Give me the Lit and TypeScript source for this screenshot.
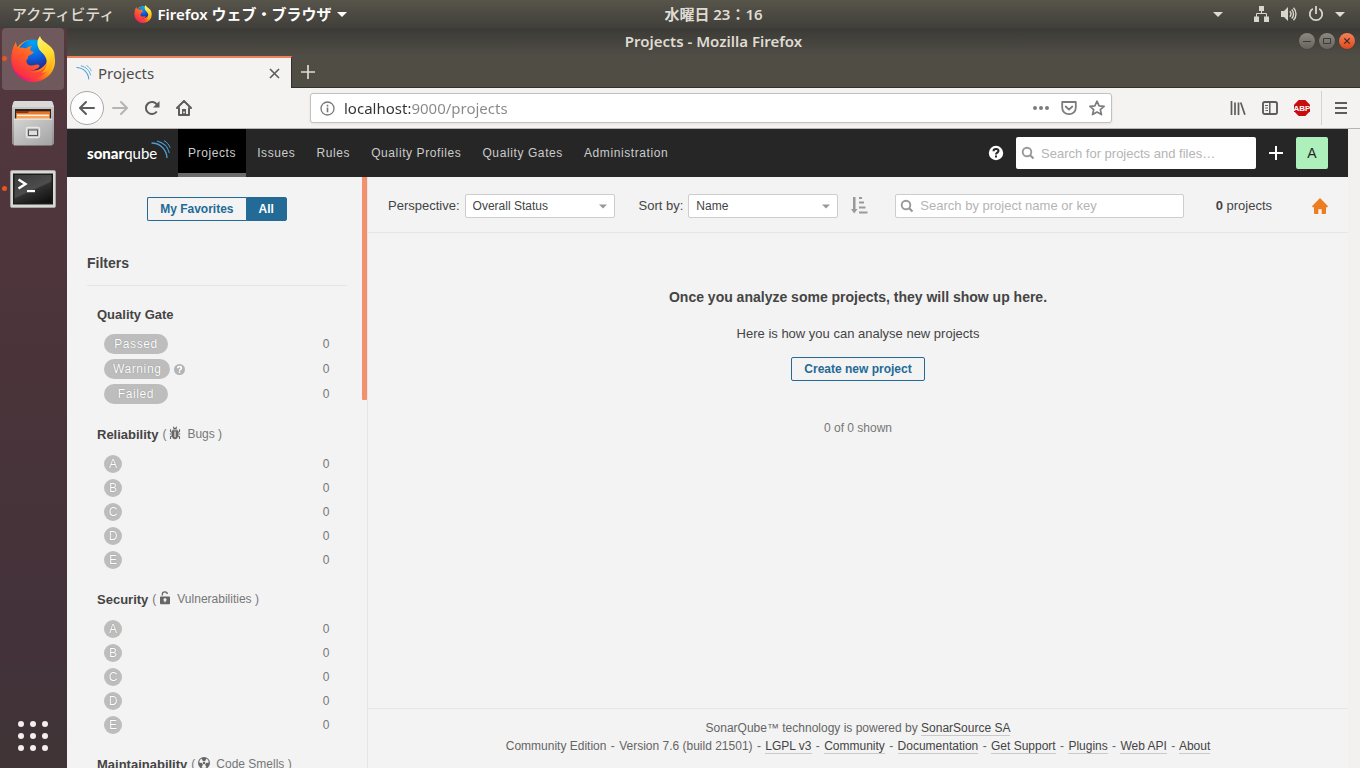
import { LitElement, html, svg, css, nothing } from "lit";
import { customElement, property } from "lit/decorators.js";

const firefoxLogo = (id: string, size: number) => html`
  <svg width=${size} height=${size} viewBox="0 0 46 46" aria-hidden="true">
    <defs>
      <linearGradient id="${id}-body" x1="0.9" y1="0.1" x2="0.1" y2="0.9">
        <stop offset="0" stop-color="#fff14a" />
        <stop offset="0.3" stop-color="#ffc21a" />
        <stop offset="0.5" stop-color="#ff8a16" />
        <stop offset="0.72" stop-color="#ff3b3d" />
        <stop offset="1" stop-color="#d9128a" />
      </linearGradient>
      <radialGradient id="${id}-globe" cx="0.5" cy="0.1" r="0.95">
        <stop offset="0" stop-color="#00a8f5" />
        <stop offset="0.5" stop-color="#0a63e0" />
        <stop offset="1" stop-color="#28197c" />
      </radialGradient>
      <linearGradient id="${id}-head" x1="0.8" y1="0" x2="0.1" y2="1">
        <stop offset="0" stop-color="#ff9a1c" />
        <stop offset="0.5" stop-color="#ff5a2a" />
        <stop offset="1" stop-color="#f8204e" />
      </linearGradient>
      <linearGradient id="${id}-tail" x1="0.4" y1="0" x2="0.6" y2="1">
        <stop offset="0" stop-color="#fff36a" />
        <stop offset="0.5" stop-color="#ffdd2e" />
        <stop offset="1" stop-color="#ff9f14" />
      </linearGradient>
    </defs>
    <path fill="url(#${id}-body)" d="M6 6c0 2 .6 4 1.400 5.500C10 8 14 5 19 4h9c9 3 17 12 17 21 0 12-10 21-22 21S1 36 1 24C1 17 3 11 6 6z" />
    <circle cx="23" cy="19" r="15.500" fill="url(#${id}-globe)" />
    <path fill="url(#${id}-head)" d="M6 6c0 3 .6 5 1.500 6 3-1 6-.7 8.500.5 1.500-1.500 3.500-2.500 6-2.500-1.500 1.500-2 3-1.500 5 2 .6 3.500.4 3 1.600-.6 1.600-5 3-5.500 4.400-.4 1.500.5 3-1.500 2.500-.5 3 1 5.500 4 6 3.500.4 5.500-1.500 8-.8 1.700.5 1 2.300-.5 3.300-3 2-7 3.500-11 2 5 4 12 3 16-1 3-3 5-8 4-14l4 1c1 9-5 21-16 22C11 44 2 35 2 24 2 16 3 11 6 6z" />
    <path fill="url(#${id}-tail)" d="M30 0c-3 4-3.500 8-1.500 12 1.500 4 7 6 8 12 .8 5-1 10-5 13 7-1 12-6 13-14C46 12 38 9 34 5.500 32 4 30.500 2 30 0z" />
  </svg>
`;

const waves = (size: number) => html`
  <svg width=${size} height=${size} viewBox="0 0 20 20" fill="none" stroke="#4b9fd5" aria-hidden="true">
    <path stroke-width="1.300" d="M.5 3C9 3 15.500 9.500 16 18" />
    <path stroke-width="1.100" d="M6 1c7 1.700 11 6 12.300 12" />
    <path stroke-width="1" d="M13 .7c3 1.500 5 4 6.200 7" />
  </svg>
`;

const caret = (w: number, color: string) => html`
  <svg class="caret" width=${w} height="5" viewBox="0 0 10 5" aria-hidden="true"><path fill=${color} d="M0 0h10L5 5z" /></svg>
`;

const magnifier = html`
  <svg width="14" height="14" viewBox="0 0 14 14" fill="none" stroke="#999" aria-hidden="true">
    <circle cx="6" cy="6" r="4.300" stroke-width="1.900" />
    <path stroke-width="2.200" d="M9.200 9.200l3.300 3.300" />
  </svg>
`;

const bug = svg`
  <g fill="none" stroke="#666" stroke-width="1.100">
    <path d="M1.500 3.200v2.300l2 1.300M10.500 3.200v2.300l-2 1.300M.8 8h2.500M11.200 8H8.700M1.500 13v-2.200l2-1.300M10.500 13v-2.200l-2-1.300M4.300.8l1 1.500M7.700.8l-1 1.500" />
  </g>
  <path fill="#666" d="M3.800 3.600C4 2.400 5 2 6 2s2 .4 2.200 1.600z" />
  <path fill="#666" fill-rule="evenodd" d="M3 4.200h6V10c0 2-1.300 3.200-3 3.200S3 12 3 10zM5.400 5.500v5.700h1.200V5.500z" />
`;
const lock = svg`
  <path fill="none" stroke="#666" stroke-width="1.300" d="M3.300 4.500V3.300C3.300 1.700 4.400.8 5.800.8s2.500.9 2.500 2.300" />
  <path fill="#666" fill-rule="evenodd" d="M1.800 5.500h8.400c.5 0 .8.300.8.800v6c0 .5-.3.900-.8.900H1.800c-.5 0-.8-.4-.8-.9v-6c0-.5.3-.8.800-.8zM6 7.200a1.500 1.500 0 0 0-.6 2.900v1.200h1.200v-1.200A1.500 1.500 0 0 0 6 7.200z" />
`;
const smell = svg`
  <circle cx="6" cy="7" r="6" fill="#666" />
  <path fill="#f3f3f3" d="M6 7L3.400 2.600A5 5 0 0 0 1.200 6.800zM6 7l2.600-4.400a5 5 0 0 1 2.200 4.200zM6 7l-2.500 4.300a5 5 0 0 0 5 0z" />
  <circle cx="6" cy="7" r="1.900" fill="#f3f3f3" />
  <circle cx="6" cy="7" r="1.200" fill="#666" />
`;

@customElement("sq-facet")
class SqFacet extends LitElement {
  @property() heading = "";
  @property() metric = "";
  @property({ attribute: false }) icon: unknown = nothing;
  @property({ type: Boolean }) ratings = false;
  @property({ attribute: false }) items: string[] = [];

  static styles = css`
    :host { display: block; }
    .head { display: flex; align-items: center; height: 20px; padding: 0 10px; white-space: nowrap; color: #777; font-size: 12px; }
    .title { margin: 0; font-size: 13px; font-weight: 700; color: #444; }
    .metric { display: flex; align-items: center; margin-left: 4px; }
    .metric svg { margin: 0 6px 3px 3px; }
    .list { list-style: none; margin: 10px 0 0; padding: 0; display: flex; flex-direction: column; gap: 5px; }
    .row {
      display: flex; align-items: center; width: 100%; height: 20px; padding: 0 17px; border: 0; background: none;
      font-family: inherit; font-size: 12px; color: #777; letter-spacing: 0.05em; text-align: left;
    }
    .ratings .row { height: 19px; }
    .pill {
      box-sizing: border-box; min-width: 64px; height: 20px; padding: 0 9px; border-radius: 10px; background: #bdbdbd;
      color: #fff; line-height: 20px; text-align: center; text-shadow: 0 0 1px rgba(0, 0, 0, 0.35);
    }
    .rating {
      width: 18px; height: 18px; border-radius: 50%; background: #bdbdbd; color: #fff; line-height: 18px;
      text-align: center; letter-spacing: 0; text-shadow: 0 0 1px rgba(0, 0, 0, 0.35);
    }
    .hint { margin: 1px 0 0 4px; }
    .count { margin-left: auto; }
  `;

  render() {
    return html`
      <div class="head">
        <h3 class="title">${this.heading}</h3>
        ${this.metric
          ? html`<span class="metric">(<svg width="12" height="14" viewBox="0 0 12 14" aria-hidden="true">${this.icon}</svg>${this.metric} )</span>`
          : nothing}
      </div>
      <ul class="list ${this.ratings ? "ratings" : ""}">
        ${this.items.map(
          (label) => html`<li>
            <button class="row" type="button">
              <span class=${this.ratings ? "rating" : "pill"}>${label}</span>
              ${label === "Warning"
                ? html`<svg class="hint" width="11" height="11" viewBox="0 0 16 16" aria-hidden="true">
                    <circle cx="8" cy="8" r="8" fill="#b4b4b4" />
                    <path fill="none" stroke="#fff" stroke-width="2.200" d="M5.300 6.300C5.300 4.500 6.500 3.700 8 3.700s2.700.9 2.700 2.300C10.700 7.700 8 7.700 8 9.700" />
                    <path fill="#fff" d="M6.900 10.800h2.200V13H6.900z" />
                  </svg>`
                : nothing}
              <span class="count">0</span>
            </button>
          </li>`
        )}
      </ul>
    `;
  }
}

@customElement("app-root")
class AppRoot extends LitElement {
  static styles = css`
    :host {
      display: flex; flex-direction: column; height: 100vh; overflow: hidden; background: #f3f3f3;
      font-family: "Liberation Sans", Arial, sans-serif; font-size: 13px; color: #444;
    }
    * { box-sizing: border-box; }
    button, input, select { font-family: inherit; margin: 0; }
    button { padding: 0; border: 0; background: none; color: inherit; }
    a { color: inherit; text-decoration: none; }
    svg { display: block; flex: none; }

    /* desktop top bar */
    .panel {
      flex: none; display: grid; grid-template-columns: 1fr auto 1fr; align-items: center; height: 28px;
      background: linear-gradient(#57544a, #403f3a);
      font-family: "Noto Sans", "Noto Sans CJK JP", sans-serif; color: #dfdbd2; white-space: nowrap;
    }
    .panel-left { display: flex; align-items: center; padding-left: 12px; }
    .activities { font-size: 15px; font-weight: 500; line-height: 28px; }
    .app-menu { display: flex; align-items: center; gap: 5px; margin-left: 20px; font-size: 15px; font-weight: 600; line-height: 28px; color: #fff; }
    .clock { padding-left: 67px; font-weight: 600; font-size: 15px; line-height: 28px; }
    .tray { display: flex; align-items: center; justify-content: flex-end; gap: 11px; padding-right: 15px; }
    .network { margin-left: 20px; }

    .desktop { flex: 1; min-height: 0; display: flex; }
    .dock {
      flex: none; width: 67px; display: flex; flex-direction: column; align-items: center; gap: 3px; padding-right: 1px;
      background: linear-gradient(#54393f, #4b343a 40%, #43323a 85%, #3f3436);
    }
    .dock-item { position: relative; display: flex; align-items: center; justify-content: center; width: 62px; height: 62px; border-radius: 4px; }
    .dock-item.focused { background: #6f595d; }
    .dock-item.running::before { content: ""; position: absolute; left: 0; top: 28px; width: 5px; height: 5px; border-radius: 50%; background: #e95420; }
    .dock-apps { margin-top: auto; margin-bottom: 16px; }

    .window { flex: 1; min-width: 0; display: flex; flex-direction: column; }
    .titlebar {
      flex: none; display: grid; grid-template-columns: 1fr auto 1fr; align-items: center; height: 28px; padding-bottom: 2px;
      background: linear-gradient(#3b3a36, #504d45); color: #dfdbd2;
      font: 600 15px/26px "Noto Sans", sans-serif;
    }
    .window-title { grid-column: 2; }
    .window-buttons { display: flex; justify-content: flex-end; gap: 4px; padding-right: 5px; }
    .window-button { width: 16px; height: 16px; border-radius: 50%; background: linear-gradient(#8b8982, #66645d); box-shadow: 0 0 1px #2c2b28; }
    .window-button.close { background: linear-gradient(#f5825a, #dd4a1c); }

    .tabs { flex: none; display: flex; height: 32px; background: #504d45; border-bottom: 1px solid #33312c; }
    .tab {
      display: flex; align-items: center; width: 225px; height: 32px; padding: 0 11px 0 9px; gap: 6px;
      background: #f4f3f2; border-top: 2px solid #f08259; border-right: 1px solid #33312c; color: #4c4c4c;
      font: 15px/28px "Noto Sans", sans-serif;
    }
    .tab-close { margin-left: auto; }
    .tab-new { width: 32px; display: flex; align-items: center; justify-content: center; }

    .toolbar { flex: none; display: flex; align-items: center; height: 41px; padding: 0 3px; background: #f4f3f2; border-bottom: 1px solid #b8b5b1; }
    .tool { display: flex; align-items: center; justify-content: center; width: 32px; height: 34px; }
    .tool.back { width: 34px; border: 1px solid #a9a8a7; border-radius: 50%; background: #fdfdfd; }
    .separator { width: 1px; height: 34px; margin: 0 3px; background: #d5d3d1; }
    .urlbar {
      flex: 1; min-width: 0; display: flex; align-items: center; gap: 12px; height: 30px; margin: 0 110px; padding: 0 6px 0 9px;
      background: #fff; border: 1px solid #c3c1bf; border-radius: 3px; box-shadow: 0 1px 3px rgba(0, 0, 0, 0.08);
    }
    .url {
      flex: 1; min-width: 0; height: 24px; padding: 0; margin-left: -3px; border: 0; outline: 0; color: transparent;
      background: linear-gradient(to right, #333 66px, #888 66px); -webkit-background-clip: text; background-clip: text;
      font: 15px/24px "Noto Sans", sans-serif;
    }

    .viewport { flex: 1; min-height: 0; display: flex; flex-direction: column; padding-right: 12px; background: #f2f1f0; }

    /* global navigation */
    .nav { flex: none; display: flex; align-items: center; height: 48px; padding: 0 20px; background: #262626; color: #fff; }
    .brand { display: flex; width: 91px; font: 900 15px/18px Lato, sans-serif; }
    .brand-light { font-weight: 400; }
    .brand svg { margin-top: -4px; margin-left: -6px; }
    .nav-links { display: flex; flex: 1; gap: 1px; margin: 0; padding: 0; list-style: none; }
    .nav-link { display: block; height: 48px; padding: 0 10px; color: #ccc; font-size: 12px; line-height: 48px; letter-spacing: 0.05em; border-bottom: 4px solid transparent; white-space: nowrap; }
    .nav-link.active { background: #000; border-bottom-color: #6b6b6b; }
    .nav-search { position: relative; margin: 0 12px; }
    .nav-input { display: block; width: 240px; height: 32px; padding: 0 8px 0 25px; border: 0; border-radius: 2px; background: #fff; font-size: 13px; color: #444; }
    .search-icon { position: absolute; left: 5px; top: 9px; }
    ::placeholder { color: #b4b4b4; opacity: 1; }
    .avatar { width: 32px; height: 32px; margin-left: 12px; border-radius: 2px; background: #adf0bc; color: #262626; font-size: 14px; line-height: 32px; text-align: center; }

    .page { flex: 1; min-height: 0; display: flex; background: #f3f3f3; }
    .sidebar { position: relative; flex: none; width: 301px; border-right: 1px solid #e6e6e6; padding: 20px 20px 0; overflow: hidden; display: flex; flex-direction: column; }
    .sidebar > * { flex: none; }
    .scroll-thumb { position: absolute; top: 0; right: 0; width: 5px; height: 223px; border-radius: 0 0 1px 1px; background: #f2916b; }
    .toggle { display: flex; justify-content: center; }
    .button { height: 24px; padding: 0 12px; border: 1px solid #236a97; color: #236a97; font-size: 12px; font-weight: 700; line-height: 22px; border-radius: 2px; }
    .toggle .button:first-child { border-radius: 2px 0 0 2px; border-right: 0; }
    .toggle .button:last-child { border-radius: 0 2px 2px 0; background: #236a97; color: #fff; }
    .filters-title { margin: 32px 0 18px; padding-bottom: 12px; border-bottom: 1px solid #e6e6e6; font-size: 14px; line-height: 20px; }
    .facets { display: flex; flex-direction: column; gap: 20px; }

    .main { flex: 1; min-width: 0; display: flex; flex-direction: column; }
    .filters-bar { flex: none; display: flex; align-items: center; height: 56px; padding: 2px 20px 0; border-bottom: 1px solid #e6e6e6; white-space: nowrap; }
    .field { display: flex; align-items: center; gap: 5px; margin-right: 24px; }
    .field + .field { margin-right: 13px; }
    .select-wrap { position: relative; }
    .select { display: block; appearance: none; width: 150px; height: 24px; padding: 0 24px 0 7px; border: 1px solid #cdcdcd; border-radius: 2px; background: #fff; color: #444; font-size: 12px; }
    .select-wrap .caret { position: absolute; right: 8px; top: 10px; pointer-events: none; }
    .project-search { position: relative; flex: 1; min-width: 0; margin: 0 32px 0 27px; }
    .project-input { display: block; width: 100%; height: 24px; padding: 0 8px 0 24px; border: 1px solid #cdcdcd; border-radius: 2px; background: #fff; font-size: 13px; color: #444; }
    .project-search .search-icon { top: 5px; }
    .total { margin-right: 40px; }

    .empty { flex: 1; display: flex; flex-direction: column; align-items: center; padding-top: 54px; }
    .empty-title { margin: 0 0 17px; font-size: 14px; line-height: 20px; }
    .empty-text { margin: 0 0 13px; line-height: 20px; }
    .shown { margin: 37px 0 0; font-size: 12px; line-height: 20px; color: #777; }
    .footer { flex: none; padding: 10px 0 13px; border-top: 1px solid #e6e6e6; font-size: 12px; line-height: 18px; color: #656565; text-align: center; }
    .footer a { color: #444; border-bottom: 1px solid #cacaca; }
    .dash { margin: 0 1px; }
  `;

  render() {
    const ratings = ["A", "B", "C", "D", "E"];
    const navItems = ["Projects", "Issues", "Rules", "Quality Profiles", "Quality Gates", "Administration"];
    const footerLinks = ["LGPL v3", "Community", "Documentation", "Get Support", "Plugins", "Web API", "About"];
    const dash = html` <span class="dash">-</span> `;
    return html`
      <header class="panel">
        <div class="panel-left">
          <button class="activities" type="button" lang="ja">アクティビティ</button>
          <button class="app-menu" type="button" lang="ja">${firefoxLogo("menu", 18)}Firefox ウェブ・ブラウザ${caret(10, "#fff")}</button>
        </div>
        <time class="clock" lang="ja">水曜日 23：16</time>
        <div class="tray">
          ${caret(10, "#dfdbd2")}
          <svg class="network" width="15" height="16" viewBox="0 0 15 16" aria-label="Network" role="img">
            <path fill="#d8d5cd" d="M5 0h5v5H5zM0 10.500h5V16H0zM10 10.500h5V16h-5z" /><path fill="none" stroke="#d8d5cd" d="M7.500 5v3M2.500 11V7.500h10V11" />
          </svg>
          <svg width="17" height="16" viewBox="0 0 17 16" aria-label="Volume" role="img">
            <path fill="#d8d5cd" d="M1 5h3l4-4v14l-4-4H1z" />
            <path fill="none" stroke="#d8d5cd" stroke-width="1.400" d="M9.800 5.300a4 4 0 0 1 0 5.400M11.700 3.500a6.500 6.500 0 0 1 0 9M13.500 1.800a9 9 0 0 1 0 12.400" />
          </svg>
          <svg width="16" height="16" viewBox="0 0 16 16" aria-label="Power" role="img">
            <path fill="none" stroke="#d8d5cd" stroke-width="1.800" d="M4.800 2.700a6.200 6.200 0 1 0 6.400 0M8 0v8" />
          </svg>
          ${caret(10, "#dfdbd2")}
        </div>
      </header>

      <div class="desktop">
        <aside class="dock">
          <button class="dock-item focused running" type="button" aria-label="Firefox">${firefoxLogo("dock", 46)}</button>
          <button class="dock-item" type="button" aria-label="Files">
            <svg width="44" height="46" viewBox="0 0 44 46">
              <defs>
                <linearGradient id="cab" x1="0" y1="0" x2="0" y2="1"><stop offset="0" stop-color="#cfcfcf" /><stop offset="1" stop-color="#8e8e8e" /></linearGradient>
                <linearGradient id="drawer" x1="0" y1="0" x2="1" y2="1"><stop offset="0" stop-color="#d4d4d4" /><stop offset="1" stop-color="#a3a3a3" /></linearGradient>
              </defs>
              <path fill="url(#cab)" d="M2 2c0-1 1-2 2-2h36c1 0 2 1 2 2l1 4v36c0 1-1 2-2 2H3c-1 0-2-1-2-2V6z" />
              <path fill="#d9d9d9" d="M3.500 0h37L43 6H1z" />
              <path fill="#2b2320" d="M4 8h36v10H4z" />
              <path fill="#8a3614" d="M5 10h34v3H5z" /><path fill="#e8772a" d="M5 12h12l1-1.500h21V18H5z" />
              <path fill="#fff3e2" d="M6 13.500h32V15H6z" /><path fill="#f7a458" d="M6 15h32v3H6z" />
              <path fill="url(#drawer)" d="M3 18h38v26.500H3z" /><path fill="#e9e9e9" d="M3 17.500h38v1.200H3z" />
              <rect x="15.500" y="26.500" width="13" height="10" rx="1.500" fill="#bbb" stroke="#e9e9e9" stroke-width="1.300" />
              <rect x="17.500" y="29" width="9" height="5.500" fill="#dedede" stroke="#555" />
            </svg>
          </button>
          <button class="dock-item running" type="button" aria-label="Terminal">
            <svg width="46" height="38" viewBox="0 0 46 38">
              <defs><linearGradient id="screen" x1="0.2" y1="0" x2="0.8" y2="1"><stop offset="0" stop-color="#3c3c3c" /><stop offset="0.5" stop-color="#4d4d4d" /><stop offset="0.55" stop-color="#303030" /><stop offset="1" stop-color="#111" /></linearGradient></defs>
              <rect x=".5" y=".5" width="45" height="37" rx="1.500" fill="#d8d8d5" stroke="#a5a5a3" />
              <path fill="#1c1c1c" d="M3 3.500h40v31H3z" /><path fill="url(#screen)" d="M4.500 5h37v28h-37z" />
              <path fill="none" stroke="#fff" stroke-width="2.400" d="M8.500 9.500l7 4.500-7 4.500" /><path fill="#fff" d="M17 20h8v2.200h-8z" />
            </svg>
          </button>
          <button class="dock-apps" type="button" aria-label="Show Applications">
            <svg width="32" height="32" viewBox="0 0 32 32" fill="#f2efee">
              ${[4, 16, 28].map((y) => [4, 16, 28].map((x) => svg`<circle cx=${x} cy=${y} r="3" />`))}
            </svg>
          </button>
        </aside>

        <div class="window">
          <div class="titlebar">
            <span class="window-title">Projects - Mozilla Firefox</span>
            <div class="window-buttons">
              <button class="window-button" type="button" aria-label="Minimize"><svg width="16" height="16" stroke="#3c3b37"><path d="M4 8.500h8" /></svg></button>
              <button class="window-button" type="button" aria-label="Maximize"><svg width="16" height="16" stroke="#3c3b37" fill="none"><path d="M4.500 5.500h7v5h-7z" /></svg></button>
              <button class="window-button close" type="button" aria-label="Close"><svg width="16" height="16" stroke="#3c2a20" stroke-width="1.200"><path d="M5.300 5.300l5.400 5.400M10.700 5.300l-5.400 5.400" /></svg></button>
            </div>
          </div>

          <div class="tabs">
            <div class="tab">
              ${waves(16)}<span>Projects</span>
              <button class="tab-close" type="button" aria-label="Close tab"><svg width="11" height="11" viewBox="0 0 11 11" stroke="#5c5c5c" stroke-width="1.600"><path d="M1 1l9 9M10 1l-9 9" /></svg></button>
            </div>
            <button class="tab-new" type="button" aria-label="New tab"><svg width="14" height="14" viewBox="0 0 14 14" stroke="#dfdbd2" stroke-width="1.700"><path d="M7 0v14M0 7h14" /></svg></button>
          </div>

          <div class="toolbar">
            <button class="tool back" type="button" aria-label="Back"><svg width="16" height="16" viewBox="0 0 16 16" fill="none" stroke="#5c5c5c" stroke-width="2" stroke-linecap="round" stroke-linejoin="round"><path d="M7 2L1 8l6 6M1.500 8H15" /></svg></button>
            <button class="tool" type="button" aria-label="Forward"><svg width="16" height="16" viewBox="0 0 16 16" fill="none" stroke="#b5b4b3" stroke-width="2" stroke-linecap="round" stroke-linejoin="round"><path d="M9 2l6 6-6 6M14.500 8H1" /></svg></button>
            <button class="tool" type="button" aria-label="Reload"><svg width="16" height="16" viewBox="0 0 16 16" fill="none" stroke="#5c5c5c" stroke-width="2"><path d="M12.800 11.500A6 6 0 1 1 13 4.800" /><path fill="#5c5c5c" stroke="none" d="M15.500 1v6.500H9z" /></svg></button>
            <button class="tool" type="button" aria-label="Home"><svg width="16" height="16" viewBox="0 0 16 16" fill="none" stroke="#5c5c5c" stroke-width="2" stroke-linejoin="round" stroke-linecap="round"><path d="M1 8l7-7 7 7M3 8v7h10V8" /><path fill="#5c5c5c" stroke="none" d="M6 9h4v5.500H6z" /><path fill="#f4f3f2" stroke="none" d="M7.200 11.500h1.600v1.800H7.200z" /></svg></button>
            <div class="urlbar">
              <svg width="15" height="15" viewBox="0 0 15 15" fill="none" stroke="#777"><circle cx="7.500" cy="7.500" r="6.500" stroke-width="1.300" /><path stroke-width="1.600" d="M7.500 6.500v4.700M7.500 3.800v1.600" /></svg>
              <input class="url" type="text" aria-label="Address" value="localhost:9000/projects" />
              <svg width="16" height="16" viewBox="0 0 16 16" fill="#7c7c7c" aria-label="Page actions" role="img"><circle cx="2" cy="8" r="2" /><circle cx="8" cy="8" r="2" /><circle cx="14" cy="8" r="2" /></svg>
              <svg width="16" height="16" viewBox="0 0 16 16" fill="none" stroke="#7c7c7c" stroke-width="1.800" stroke-linejoin="round" stroke-linecap="round" aria-label="Pocket" role="img"><path d="M1.200 2h13.600v5.500c0 4-3 6.700-6.800 6.700S1.200 11.500 1.200 7.500z" /><path d="M4.700 6.500L8 9.600l3.300-3.100" /></svg>
              <svg width="16" height="16" viewBox="0 0 16 16" fill="none" stroke="#7c7c7c" stroke-width="1.700" stroke-linejoin="round" aria-label="Bookmark" role="img"><path d="M8 1.200l2.100 4.600 5 .5-3.800 3.300 1.200 5L8 12l-4.500 2.600 1.200-5L.9 6.300l5-.5z" /></svg>
            </div>
            <button class="tool" type="button" aria-label="Library"><svg width="16" height="16" viewBox="0 0 16 16" stroke="#5c5c5c" stroke-width="1.700"><path d="M1.500 1v14M5 2.500V15M8.500 2.500V15M10.700 2.500l4.200 12.200" /></svg></button>
            <button class="tool" type="button" aria-label="Sidebars"><svg width="16" height="16" viewBox="0 0 16 16" fill="none" stroke="#5c5c5c"><rect x="1" y="2" width="14" height="12" rx="1.800" stroke-width="1.900" /><path stroke-width="1.500" d="M7.800 2v12" /><path d="M3 5.500h3M3 8h3M3.500 10.500H6" /></svg></button>
            <button class="tool" type="button" aria-label="Adblock Plus">
              <svg width="16" height="16" viewBox="0 0 16 16"><path fill="#c70d0d" d="M4.700 0h6.600L16 4.700v6.600L11.300 16H4.700L0 11.300V4.700z" /><text x="8" y="11" text-anchor="middle" font-family="Liberation Sans" font-weight="700" font-size="8" fill="#fff">ABP</text></svg>
            </button>
            <span class="separator"></span>
            <button class="tool" type="button" aria-label="Menu"><svg width="12" height="12" viewBox="0 0 12 12" fill="#5c5c5c"><path d="M0 0h12v2H0zM0 5h12v2H0zM0 10h12v2H0z" /></svg></button>
          </div>

          <div class="viewport">
            <nav class="nav">
              <a class="brand" href="#" aria-label="SonarQube">sonar<span class="brand-light">qube</span>${waves(20)}</a>
              <ul class="nav-links">
                ${navItems.map((item, i) => html`<li><a class="nav-link ${i === 0 ? "active" : ""}" href="#">${item}</a></li>`)}
              </ul>
              <a href="#" aria-label="Help">
                <svg width="16" height="16" viewBox="0 0 16 16"><circle cx="8" cy="8" r="7.200" fill="#fff" /><path fill="none" stroke="#262626" stroke-width="2" d="M5.500 6.300C5.500 4.700 6.600 4 8 4s2.500.8 2.500 2.100C10.500 7.700 8 7.700 8 9.500" /><path fill="#262626" d="M7 10.500h2v2H7z" /></svg>
              </a>
              <div class="nav-search">
                <span class="search-icon">${magnifier}</span>
                <input class="nav-input" type="text" aria-label="Search for projects and files" placeholder="Search for projects and files…" />
              </div>
              <button type="button" aria-label="Create"><svg width="16" height="16" viewBox="0 0 16 16" stroke="#fff" stroke-width="2"><path d="M8 1v14M1 8h14" /></svg></button>
              <button class="avatar" type="button" aria-label="A">A</button>
            </nav>

            <div class="page">
              <aside class="sidebar">
                <span class="scroll-thumb"></span>
                <div class="toggle">
                  <button class="button" type="button">My Favorites</button>
                  <button class="button" type="button">All</button>
                </div>
                <h2 class="filters-title">Filters</h2>
                <div class="facets">
                  <sq-facet heading="Quality Gate" .items=${["Passed", "Warning", "Failed"]}></sq-facet>
                  <sq-facet heading="Reliability" metric="Bugs" .icon=${bug} ratings .items=${ratings}></sq-facet>
                  <sq-facet heading="Security" metric="Vulnerabilities" .icon=${lock} ratings .items=${ratings}></sq-facet>
                  <sq-facet heading="Maintainability" metric="Code Smells" .icon=${smell} ratings .items=${ratings}></sq-facet>
                </div>
              </aside>

              <main class="main">
                <div class="filters-bar">
                  <div class="field">
                    <label for="perspective">Perspective:</label>
                    <div class="select-wrap"><select class="select" id="perspective"><option>Overall Status</option></select>${caret(8, "#999")}</div>
                  </div>
                  <div class="field">
                    <label for="sort">Sort by:</label>
                    <div class="select-wrap"><select class="select" id="sort"><option>Name</option></select>${caret(8, "#999")}</div>
                  </div>
                  <button type="button" aria-label="Sort ascending">
                    <svg width="17" height="17" viewBox="0 0 17 17" fill="#999"><path d="M2 0h2.500v12H6.500L3.200 16.500 0 12h2zM8 0h3v2H8zM8 4.500h5v2H8zM8 9.500h6.500v2H8zM8 14.500h8.500v2H8z" /></svg>
                  </button>
                  <div class="project-search">
                    <span class="search-icon">${magnifier}</span>
                    <input class="project-input" type="text" aria-label="Search projects" placeholder="Search by project name or key" />
                  </div>
                  <span class="total"><strong>0</strong> projects</span>
                  <a href="#" aria-label="Set as homepage"><svg width="16" height="16" viewBox="0 0 16 16" fill="#ed7d20"><path d="M8 0l8 8.200-.8 1H14V15c0 .6-.4 1-1 1H9.700v-4.800H6.300V16H3c-.6 0-1-.4-1-1V9.200H.8l-.8-1z" /></svg></a>
                </div>

                <section class="empty">
                  <h3 class="empty-title">Once you analyze some projects, they will show up here.</h3>
                  <p class="empty-text">Here is how you can analyse new projects</p>
                  <button class="button" type="button">Create new project</button>
                  <p class="shown">0 of 0 shown</p>
                </section>

                <footer class="footer">
                  <div>SonarQube™ technology is powered by <a href="#">SonarSource SA</a></div>
                  <div>Community Edition${dash}Version 7.6 (build 21501)${footerLinks.map((l) => html`${dash}<a href="#">${l}</a>`)}</div>
                </footer>
              </main>
            </div>
          </div>
        </div>
      </div>
    `;
  }
}
